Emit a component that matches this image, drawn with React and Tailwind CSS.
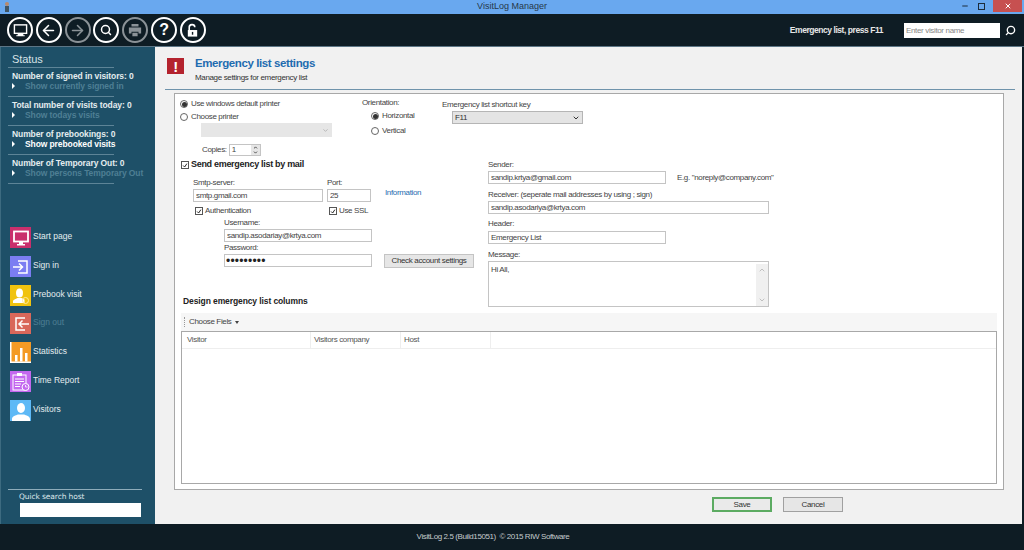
import React from "react";
import { ChevronDown, ChevronUp, Search, ArrowLeft, ArrowRight, Minus, X } from "lucide-react";

const statusRows = [
  { title: "Number of signed in visitors: 0", link: "Show currently signed in", on: false },
  { title: "Total number of visits today: 0", link: "Show todays visits", on: false },
  { title: "Number of prebookings: 0", link: "Show prebooked visits", on: true },
  { title: "Number of Temporary Out: 0", link: "Show persons Temporary Out", on: false },
];

const Person = () => (
  <>
    <ellipse cx="11" cy="8" rx="4" ry="5" fill="#fff" />
    <path d="M2 21v-2c0-3 4-3.500 6-4.500h6c2 1 6 1.500 6 4.500v2z" fill="#fff" />
  </>
);

const navItems = [
  {
    label: "Start page",
    color: "bg-[#c92f6c]",
    icon: (
      <>
        <rect x="4" y="4.500" width="14" height="10" fill="none" stroke="#fff" strokeWidth="1.800" />
        <path d="M9 15h4v2h2v1.500H7V17h2z" fill="#fff" />
      </>
    ),
  },
  {
    label: "Sign in",
    color: "bg-[#7b7df2]",
    icon: (
      <>
        <path d="M8 5h9v12H8" fill="none" stroke="#fff" strokeWidth="1.500" />
        <path d="M3 11h9M9 7.500l3.500 3.500L9 14.500" fill="none" stroke="#fff" strokeWidth="1.500" />
      </>
    ),
  },
  {
    label: "Prebook visit",
    color: "bg-[#f0c30f]",
    icon: (
      <>
        <ellipse cx="9.500" cy="8" rx="3.500" ry="4.500" fill="#fff" />
        <path d="M3 18v-1.500c0-2 3-2.500 4.500-3.500h4c1 .5 2 1 3 1.500V18z" fill="#fff" />
        <circle cx="15.500" cy="15.500" r="3" fill="none" stroke="#fde9a0" strokeWidth="1" />
      </>
    ),
  },
  {
    label: "Sign out",
    dim: true,
    color: "bg-[#d9675a]",
    icon: (
      <>
        <path d="M15 5H6v12h9" fill="none" stroke="#fff" strokeWidth="1.500" />
        <path d="M19 11H9M12.500 7.500L9 11l3.500 3.500" fill="none" stroke="#fff" strokeWidth="1.500" />
      </>
    ),
  },
  {
    label: "Statistics",
    color: "bg-[#f39a25]",
    icon: (
      <>
        <path d="M0 0h1.500v19.500H21V21H0z" fill="#fff" />
        <path d="M5 13h2.500v6.500H5zM10 6h2.500v13.500H10zM15 11h2.500v8.500H15z" fill="#fff" />
      </>
    ),
  },
  {
    label: "Time Report",
    color: "bg-[#c468ef]",
    icon: (
      <>
        <rect x="3" y="4" width="13" height="15" fill="none" stroke="#fff" strokeWidth="1" />
        <rect x="7" y="2" width="5" height="3" fill="#fff" />
        <path d="M5 8h9M5 10.500h9M5 13h6M5 15.500h5" stroke="#fff" strokeWidth="1" />
        <circle cx="15.500" cy="16" r="3.500" fill="#c468ef" stroke="#fff" strokeWidth="1" />
        <path d="M15.500 14v2h2" fill="none" stroke="#fff" strokeWidth=".8" />
      </>
    ),
  },
  { label: "Visitors", color: "bg-[#5db9f6]", icon: <Person /> },
];

const Round = ({ dim, children }) => (
  <div
    className={`flex h-[26px] w-[26px] items-center justify-center rounded-full border-2 ${
      dim ? "border-[#8b9297] text-[#8b9297]" : "border-white text-white"
    }`}
  >
    {children}
  </div>
);

const Radio = ({ on, label }) => (
  <div className="flex h-[12px] items-center gap-[3px]">
    <span className="flex h-[8px] w-[8px] items-center justify-center rounded-full border border-[#666] bg-white">
      {on && <span className="h-[5px] w-[5px] rounded-full bg-[#333]" />}
    </span>
    <span>{label}</span>
  </div>
);

const Check = ({ label, className = "" }) => (
  <div className={`flex h-[10px] items-center gap-[2px] ${className}`}>
    <span className="flex h-[8px] w-[8px] items-center justify-center border border-[#555] bg-white">
      <svg viewBox="0 0 8 8" className="h-[7px] w-[7px]">
        <path d="M1.500 4l2 2 3-4.500" fill="none" stroke="#222" strokeWidth="1.300" />
      </svg>
    </span>
    {label}
  </div>
);

const Field = ({ value, className = "" }) => (
  <input
    readOnly
    value={value}
    className={`h-[13px] border border-[#c4c4c4] bg-white px-[2px] text-[8px] text-[#444] outline-none ${className}`}
  />
);

const Label = ({ children, className = "" }) => <div className={`h-[10px] leading-[10px] ${className}`}>{children}</div>;

export default function App() {
  return (
    <div className="flex h-[550px] w-[1024px] flex-col overflow-hidden bg-[#0e1c24] font-['Liberation_Sans',sans-serif] text-[8px] tracking-[-0.35px] text-[#444]">
      {/* title bar */}
      <div className="relative flex h-[14px] items-center justify-center bg-[#69a8ef] text-[9px] tracking-normal text-[#27384a]">
        <svg viewBox="0 0 8 12" className="absolute left-[3px] top-[1px] h-[12px] w-[8px]">
          <circle cx="4" cy="3" r="2" fill="#b98a6c" />
          <rect x="2" y="5" width="4" height="6" fill="#3f5566" />
        </svg>
        VisitLog Manager
        <div className="absolute right-[2px] top-0 flex h-[12px] items-center">
          <Minus size={8} strokeWidth={3} className="mr-[9px] text-[#1c2c3c]" />
          <div className="relative mr-[8px] h-[7px] w-[7px] border border-[#1c2c3c]" />
          <div className="flex h-[12px] w-[29px] items-center justify-center bg-[#c75050] text-white">
            <X size={8} strokeWidth={3} />
          </div>
        </div>
      </div>

      {/* toolbar */}
      <div className="flex h-[33px] items-center border-b border-[#5d7686] bg-[#0e1c24] pl-[7px] pr-[8px]">
        <div className="flex gap-[2.800px]">
          <Round>
            <svg viewBox="0 0 16 16" className="h-[15px] w-[15px]">
              <rect x="1.500" y="2" width="13" height="9" fill="none" stroke="currentColor" strokeWidth="1.500" />
              <path d="M5 11.500h6V13h1.500v1.200h-9V13H5z" fill="currentColor" />
            </svg>
          </Round>
          <Round>
            <ArrowLeft size={17} strokeWidth={2.200} />
          </Round>
          <Round dim>
            <ArrowRight size={17} strokeWidth={2.200} />
          </Round>
          <Round>
            <Search size={12} strokeWidth={3} />
          </Round>
          <Round dim>
            <svg viewBox="0 0 16 16" className="h-[14px] w-[14px]">
              <path d="M4 1h8v3H4zM1 5h14v7h-3v-2H4v2H1zM5 11h6v4H5z" fill="currentColor" />
            </svg>
          </Round>
          <Round>
            <span className="text-[16px] font-bold leading-none">?</span>
          </Round>
          <Round>
            <svg viewBox="0 0 16 16" className="h-[15px] w-[15px]">
              <path d="M4.500 8V5a3 3 0 0 1 6-.5" fill="none" stroke="currentColor" strokeWidth="1.700" />
              <path d="M3 7.500h10v7H3z" fill="currentColor" />
              <rect x="7.300" y="9.500" width="1.500" height="3" fill="#0e1c24" />
            </svg>
          </Round>
        </div>
        <div className="ml-auto text-[8.500px] font-bold tracking-[-0.45px] text-[#e6e6e6]">Emergency list, press F11</div>
        <input
          readOnly
          placeholder="Enter visitor name"
          className="ml-[21px] h-[15px] w-[96px] bg-white px-[2px] text-[8px] text-[#555] outline-none placeholder:text-[#888]"
        />
        <Search size={11} strokeWidth={3} className="ml-[5px] -scale-x-100 text-white" />
      </div>

      {/* middle */}
      <div className="flex h-[477px] pr-[2px]">
        <aside className="flex w-[155px] flex-col border-l border-[#3d6b80] bg-[#1e5068] pr-[13px] tracking-[-0.1px] text-[#e4ecef]">
          <div className="mb-[1px] ml-[11px] pt-[6px] text-[11px] leading-[13px] text-[#d8e2e6]">Status</div>
          {statusRows.map((row) => (
            <div key={row.title} className="ml-[7px] h-[29px] font-bold">
              <div className="w-[106px] border-t border-[#5d8497]" />
              <div className="pl-[4px] pt-[3px] text-[8.500px] leading-[10px]">{row.title}</div>
              <div className="flex items-center pl-[4px] text-[8.500px] leading-[10px]">
                <span className="mr-[10px] h-0 w-0 border-y-[3px] border-l-[3px] border-y-transparent border-l-white" />
                <span className={`whitespace-nowrap ${row.on ? "text-white" : "text-[#4e7f94]"}`}>{row.link}</span>
              </div>
            </div>
          ))}
          <div className="ml-[7px] w-[106px] border-t border-[#5d8497]" />

          <nav className="mt-[43px] flex flex-col gap-[7.800px] pl-[9px]">
            {navItems.map((item) => (
              <div key={item.label} className="flex h-[21px] items-start gap-[2px]">
                <div className={`h-[21px] w-[21px] shrink-0 ${item.color}`}>
                  <svg viewBox="0 0 21 21" className="h-[21px] w-[21px]">
                    {item.icon}
                  </svg>
                </div>
                <span className={`text-[8.500px] leading-[10px] pt-[4px] tracking-normal ${item.dim ? "text-[#4e7f94]" : "text-[#e4ecef]"}`}>
                  {item.label}
                </span>
              </div>
            ))}
          </nav>

          <div className="ml-[7px] mt-auto w-[134px] border-t border-[#8eacba] pb-[7px] pl-[11px] pt-[2px]">
            <div className="font-['DejaVu_Sans',sans-serif] text-[7.500px] leading-[10px] text-[#dfe8ec]">Quick search host</div>
            <input readOnly className="ml-[1px] mt-[1px] block h-[14px] w-[121px] bg-white outline-none" />
          </div>
        </aside>

        <main className="flex min-w-0 flex-1 flex-col bg-[#f1f1f1] pl-[10px] pr-[7px]">
          <div className="flex h-[43px] shrink-0 items-start border-b border-[#6f93ab] pl-[2px] pt-[11px]">
            <div className="flex h-[16px] w-[17px] items-center justify-center bg-[#b4232e] text-[15px] font-bold leading-none text-white">!</div>
            <div className="ml-[11px]">
              <div className="-mt-[1px] text-[11.500px] font-bold leading-[13px] tracking-[-0.4px] text-[#1f6cb0]">Emergency list settings</div>
              <div className="mt-[3px] text-[8px] leading-[10px] text-[#333]">Manage settings for emergency list</div>
            </div>
          </div>

          <section className="ml-[9px] mr-[11px] mt-[3px] flex h-[397px] flex-col border border-[#a8a8a8] bg-white px-[5px]">
            <div className="flex h-[63px] shrink-0">
              <div className="w-[182px] pt-[4px]">
                <Radio on label="Use windows default printer" />
                <div className="mt-[1px]">
                  <Radio label="Choose printer" />
                </div>
                <div className="ml-[21px] flex h-[14px] w-[131px] items-center justify-end bg-[#e6e6e6] pr-[3px] text-[#999]">
                  <ChevronDown size={7} />
                </div>
                <div className="ml-[22px] mt-[7px] flex h-[12px] items-center gap-[2px]">
                  Copies:
                  <div className="flex h-[12px] w-[32px] items-center justify-between border border-[#c4c4c4] pl-[2px]">
                    1
                    <div className="flex h-[10px] w-[9px] flex-col items-center justify-center bg-[#e6e6e6] text-[#333]">
                      <ChevronUp size={5} strokeWidth={4} />
                      <ChevronDown size={5} strokeWidth={4} />
                    </div>
                  </div>
                </div>
              </div>
              <div className="w-[80px] pt-[4px]">
                <Label>Orientation:</Label>
                <div className="ml-[9px] mt-[2px] flex flex-col gap-[3px]">
                  <Radio on label="Horizontal" />
                  <Radio label="Vertical" />
                </div>
              </div>
              <div className="pt-[6px]">
                <Label>Emergency list shortcut key</Label>
                <div className="ml-[10px] mt-[1px] flex h-[13px] w-[131px] items-center justify-between border border-[#b5b5b5] bg-[#e4e4e4] px-[2px] text-[#333]">
                  F11
                  <ChevronDown size={8} strokeWidth={3} />
                </div>
              </div>
            </div>

            <div className="flex h-[150px] shrink-0">
              <div className="flex w-[308px] flex-col">
                <Check
                  label={<span className="text-[9px] font-bold tracking-[-0.3px] text-[#222]">Send emergency list by mail</span>}
                  className="ml-[1px] mt-[3px]"
                />
                <div className="ml-[13px] mt-[8px] flex">
                  <div className="w-[134px]">
                    <Label>Smtp-server:</Label>
                    <Field value="smtp.gmail.com" className="mt-[1px] w-[130px]" />
                  </div>
                  <div className="w-[58px]">
                    <Label>Port:</Label>
                    <Field value="25" className="mt-[1px] w-[44px]" />
                  </div>
                  <div className="pt-[9px] text-[#1f6cb0]">Information</div>
                </div>
                <div className="ml-[15px] mt-[4px] flex">
                  <Check label="Authentication" className="w-[134px]" />
                  <Check label="Use SSL" />
                </div>
                <div className="ml-[44px] mt-[2px]">
                  <Label>Username:</Label>
                  <Field value="sandip.asodariay@krtya.com" className="mt-[1px] block w-[148px]" />
                  <Label className="mt-[1px]">Password:</Label>
                  <div className="mt-[1px] flex items-start gap-[12px]">
                    <input
                      readOnly
                      type="password"
                      value="*********"
                      className="h-[13px] w-[148px] shrink-0 border border-[#c4c4c4] bg-white px-[1px] text-[12px] tracking-[0.2px] text-[#222] outline-none"
                    />
                    <div className="flex h-[14px] w-[90px] shrink-0 items-center justify-center border border-[#c4c4c4] bg-[#e6e6e6] text-[#333]">
                      Check account settings
                    </div>
                  </div>
                </div>
                <div className="ml-[3px] mt-[28px] text-[8.500px] font-bold leading-[11px] tracking-[-0.1px] text-[#222]">Design emergency list columns</div>
              </div>

              <div className="flex flex-col pt-[3px]">
                <Label>Sender:</Label>
                <div className="mt-[1px] flex items-center">
                  <Field value="sandip.krtya@gmail.com" className="w-[178px]" />
                  <span className="ml-[11px] whitespace-nowrap">E.g. "noreply@company.com"</span>
                </div>
                <Label className="mt-[6px]">Receiver: (seperate mail addresses by using ; sign)</Label>
                <Field value="sandip.asodariya@krtya.com" className="mt-[1px] w-[281px]" />
                <Label className="mt-[5px]">Header:</Label>
                <Field value="Emergency List" className="mt-[2px] w-[178px]" />
                <Label className="mt-[6px]">Message:</Label>
                <div className="mt-[1px] flex h-[47px] w-[281px] border border-[#c4c4c4] pl-[2px] pt-[2px]">
                  Hi All,
                  <div className="ml-auto flex h-full w-[12px] flex-col items-center justify-between bg-[#f0f0f0] py-[2px] text-[#a6a6a6]">
                    <ChevronUp size={8} />
                    <ChevronDown size={8} />
                  </div>
                </div>
              </div>
            </div>

            <div className="ml-[1px] mr-[1px] mt-[6px] flex h-[18px] shrink-0 items-center bg-[#f6f6f6] pl-[3px]">
              <span className="mr-[4px] h-[10px] border-l border-dotted border-[#999]" />
              Choose Fiels
              <span className="ml-[3px] h-0 w-0 border-x-[2px] border-t-[3px] border-x-transparent border-t-[#444]" />
            </div>
            <div className="mb-[5px] ml-[1px] mr-[1px] min-h-0 flex-1 border border-[#a8a8a8] bg-white">
              <div className="flex h-[17px] items-center border-b border-[#eee] text-[8px] text-[#555]">
                <div className="w-[129px] border-r border-[#eee] pl-[5px] leading-[16px]">Visitor</div>
                <div className="w-[90px] border-r border-[#eee] pl-[3px] leading-[16px]">Visitors company</div>
                <div className="w-[90px] border-r border-[#eee] pl-[3px] leading-[16px]">Host</div>
              </div>
            </div>
          </section>

          <div className="flex justify-end gap-[11px] pr-[172px] pt-[7px]">
            <div className="flex h-[15px] w-[60px] items-center justify-center border-2 border-[#5cab62] bg-[#eaeaea] text-[#333]">Save</div>
            <div className="flex h-[15px] w-[60px] items-center justify-center border border-[#a0a0a0] bg-[#e6e6e6] text-[#333]">Cancel</div>
          </div>
        </main>
      </div>

      {/* footer */}
      <div className="flex flex-1 items-center justify-center pr-[38px] text-[8px] tracking-[-0.4px] text-[#c4cacd]">VisitLog 2.5 (Build15051) &nbsp;© 2015 RIW Software</div>
    </div>
  );
}
